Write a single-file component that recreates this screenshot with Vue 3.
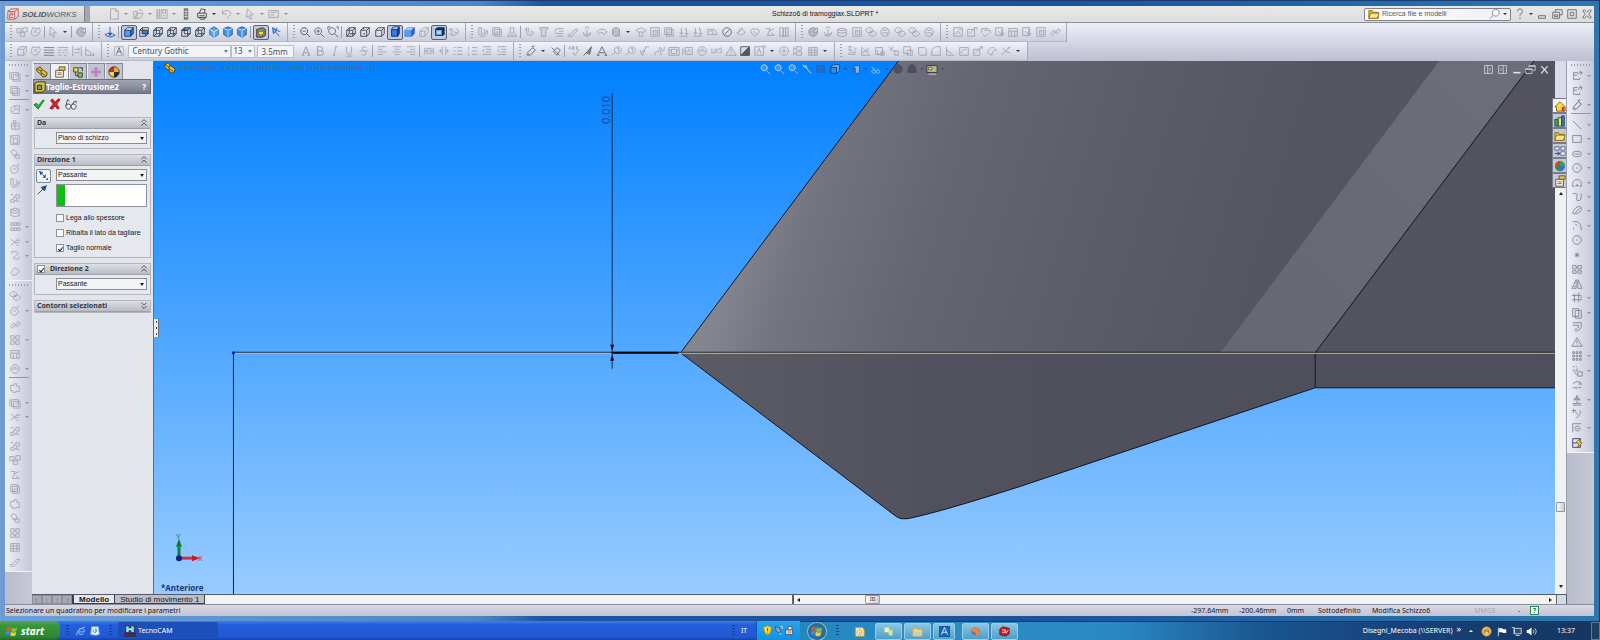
<template>
  <div class="desktop">
    <div class="window">
      <!-- Barra del titolo -->
      <header class="titlebar">
        <div class="brand">
          <Glyph name="logo" />
          <span><b>SOLID</b>WORKS</span>
          <button class="brand-more" aria-label="Menu"></button>
        </div>
        <div class="quick">
          <template v-for="(t, i) in quick" :key="i">
            <i v-if="t.kind === 'drop'" class="drop" :class="{ dark: t.dark }"></i>
            <button v-else class="tool" :class="{ dark: t.dark }" :aria-label="t.name"><Glyph :name="t.name" /></button>
          </template>
        </div>
        <h1>Schizzo6 di tramoggiax.SLDPRT *</h1>
        <div class="title-right">
          <label class="search">
            <Glyph name="folder" />
            <input type="text" placeholder="Ricerca file e modelli" aria-label="Ricerca file e modelli" />
            <Glyph name="lens" />
            <i class="drop dark"></i>
          </label>
          <button class="tool" aria-label="Guida"><Glyph name="help" /></button>
          <i class="drop dark"></i>
          <button v-for="n in ['min', 'restore', 'max', 'close']" :key="n" class="tool" :aria-label="n"><Glyph :name="n" /></button>
        </div>
      </header>

      <!-- Barre degli strumenti -->
      <div class="toolrows">
        <div v-for="(row, r) in rows" :key="r" class="toolrow">
          <div v-for="(bar, b) in row" :key="b" class="toolbar" :style="{ width: bar.width + 'px' }">
            <i class="grip"></i>
            <template v-for="(t, i) in bar.items" :key="i">
              <i v-if="t.kind === 'sep'" class="sep"></i>
              <i v-else-if="t.kind === 'drop'" class="drop-cell"><i class="drop dark"></i></i>
              <template v-else-if="t.kind === 'font'">
                <span class="picker plain font-name">
                  <select aria-label="Carattere"><option>Century Gothic</option></select>
                </span>
                <span class="picker plain font-size">
                  <select aria-label="Dimensione"><option>13</option></select>
                </span>
                <input class="font-height" type="text" value="3.5mm" aria-label="Altezza" />
              </template>
              <button v-else class="tool" :class="{ pressed: t.pressed, dark: t.dark }" :aria-label="t.name"><Glyph :name="t.name" /></button>
            </template>
          </div>
        </div>
      </div>

      <div class="main">
        <aside class="side left">
          <div v-for="(bar, b) in leftBars" :key="b" class="vbar" :class="b ? 'long' : 'short'">
            <i class="hgrip"></i>
            <template v-for="(t, i) in bar" :key="i">
              <i v-if="t.kind === 'sep'" class="hsep"></i>
              <div v-else class="vrow">
                <button class="tool" :aria-label="t.name"><Glyph :name="t.name" /></button>
                <i v-if="t.more" class="drop"></i>
              </div>
            </template>
          </div>
        </aside>

        <div class="centre">
          <div class="work">
            <!-- PropertyManager -->
            <section class="panel">
              <div class="tabs">
                <button v-for="(n, i) in panelTabs" :key="n" :class="{ on: i === 1 }" :aria-label="n"><Glyph :name="n" /></button>
              </div>
              <div class="panel-title">
                <Glyph name="cut" />
                <h2>Taglio-Estrusione2</h2>
                <button aria-label="Guida">?</button>
              </div>
              <div class="confirm">
                <button aria-label="OK"><Glyph name="check" /></button>
                <button aria-label="Annulla"><Glyph name="cross" /></button>
                <button aria-label="Anteprima"><Glyph name="glasses" /></button>
              </div>

              <div class="group">
                <h3>Da <Glyph name="up" /></h3>
                <div class="group-body">
                  <span></span>
                  <span class="picker"><select aria-label="Da"><option>Piano di schizzo</option></select></span>
                </div>
              </div>

              <div class="group">
                <h3>Direzione 1 <Glyph name="up" /></h3>
                <div class="group-body first">
                  <button class="reverse" aria-label="Inverti direzione"><Glyph name="flip" /></button>
                  <span class="picker"><select aria-label="Direzione 1"><option>Passante</option></select></span>
                  <Glyph name="arrow" />
                  <div class="selection"><i></i><input type="text" aria-label="Direzione di estrusione" /></div>
                  <label v-for="o in options" :key="o.text" class="option">
                    <input type="checkbox" v-model="o.on" />{{ o.text }}
                  </label>
                </div>
              </div>

              <div class="group">
                <h3>
                  <label><input type="checkbox" v-model="secondDirection" />Direzione 2</label>
                  <Glyph name="up" />
                </h3>
                <div class="group-body">
                  <span></span>
                  <span class="picker"><select aria-label="Direzione 2"><option>Passante</option></select></span>
                </div>
              </div>

              <div class="group">
                <h3>Contorni selezionati <Glyph name="down" /></h3>
              </div>
            </section>

            <!-- Area grafica -->
            <section class="view">
              <svg class="scene" viewBox="154 61 1402 534" preserveAspectRatio="xMinYMin slice">
                <defs>
                  <linearGradient id="face" gradientUnits="userSpaceOnUse" x1="740" y1="230" x2="1240" y2="380">
                    <stop offset="0" stop-color="#858491" />
                    <stop offset="0.12" stop-color="#747480" />
                    <stop offset="0.35" stop-color="#656671" />
                    <stop offset="0.65" stop-color="#5b5d67" />
                    <stop offset="1" stop-color="#545560" />
                  </linearGradient>
                  <linearGradient id="belly" x1="0" y1="0" x2="1" y2="0">
                    <stop offset="0" stop-color="#5c5c67" />
                    <stop offset="0.3" stop-color="#50515c" />
                    <stop offset="1" stop-color="#4e4f5b" />
                  </linearGradient>
                  <linearGradient id="stripe" x1="1" y1="0" x2="0" y2="1">
                    <stop offset="0" stop-color="#6d6e79" />
                    <stop offset="1" stop-color="#666772" />
                  </linearGradient>
                </defs>
                <path d="M681 353L899 61H1556V353z" fill="url(#face)" />
                <path d="M1221 353L1440 61H1535L1316 353z" fill="url(#stripe)" />
                <path d="M1316 353L1535 61H1556V353z" fill="#53545f" />
                <path d="M681 353L897 517Q901 520 908 519Q935 514 1020 487L1316 388H1556V353z" fill="url(#belly)" />
                <g fill="none" stroke="#14141c">
                  <path d="M899 61L681 353L897 517Q901 520 908 519Q935 514 1020 487L1316 388H1556M1316 388V353L1535 61" />
                  <path d="M233 352.5H1556" />
                  <path d="M612 353H679" stroke="#000" stroke-width="2" />
                </g>
                <path d="M233 353.5H611M679 353.5H1556" stroke="#c9bd83" fill="none" />
                <path d="M233.5 353V595" stroke="#0a1c90" />
                <circle cx="233.5" cy="353" r="1.5" fill="#0018d8" />
                <path d="M612.5 93V369" stroke="#172a55" />
                <path d="M612.5 351l-2-6h4zM612.5 355l-2 6h4z" fill="#05051a" />
                <text class="dimension" transform="translate(610 124) rotate(-90)">0.010</text>
                <g>
                  <path d="M179 558V547" stroke="#138043" stroke-width="3" />
                  <path d="M179 539l-3 8h6z" fill="#0d7d2f" />
                  <path d="M179 558.5H192" stroke="#d3303d" stroke-width="3" />
                  <path d="M200 558.5l-8-3v6z" fill="#cc1424" />
                  <circle cx="179" cy="558.5" r="3" fill="#10208c" />
                  <text class="axis y" x="176" y="539">Y</text>
                  <text class="axis x" x="198" y="561">X</text>
                </g>
                <path d="M1530 100l9 9M1539 100l-9 9" stroke="#7c4550" fill="none" />
              </svg>

              <div class="tree"><i class="drop dark"></i><Glyph name="part" /> tramoggiax&nbsp; (Default&lt; &lt;Default&gt;_Stato di visualizzazione 1&gt;)</div>
              <div class="heads-up">
                <template v-for="(t, i) in headsUp" :key="i">
                  <i v-if="t.kind === 'drop'" class="drop-cell"><i class="drop"></i></i>
                  <button v-else class="tool" :aria-label="t.name"><Glyph :name="t.name" /></button>
                </template>
              </div>
              <div class="doc-buttons">
                <button v-for="n in ['dockL', 'dockR', 'docMin', 'docRestore', 'docClose']" :key="n" class="tool" :aria-label="n"><Glyph :name="n" /></button>
              </div>
              <button class="splitter" aria-label="Riduci pannello"><i></i><i></i><i></i></button>
              <div class="view-name">*Anteriore</div>
            </section>

            <div class="vscroll">
              <div class="task-tabs">
                <button v-for="n in taskTabs" :key="n" :aria-label="n"><Glyph :name="n" /></button>
              </div>
              <button class="caret up" aria-label="Su"></button>
              <i class="thumb"></i>
              <button class="caret down" aria-label="Giù"></button>
            </div>
          </div>

          <div class="sheetbar">
            <div class="sheets">
              <button v-for="n in ['first', 'prev', 'next', 'last']" :key="n" class="nav" :aria-label="n"><Glyph :name="n" /></button>
              <button class="sheet on">Modello</button>
              <button class="sheet">Studio di movimento 1</button>
            </div>
            <div class="hscroll">
              <button class="caret prev" aria-label="Sinistra"></button>
              <i class="thumb">III</i>
              <button class="caret next" aria-label="Destra"></button>
            </div>
            <i class="corner"></i>
          </div>
        </div>

        <aside class="side right">
          <div class="vbar sketch">
            <i class="hgrip"></i>
            <template v-for="(t, i) in rightBar" :key="i">
              <i v-if="t.kind === 'sep'" class="hsep"></i>
              <div v-else class="vrow">
                <button class="tool" :aria-label="t.name"><Glyph :name="t.name" /></button>
                <i v-if="t.more" class="drop"></i>
              </div>
            </template>
          </div>
        </aside>
      </div>

      <footer class="status">
        <span class="hint">Selezionare un quadratino per modificare i parametri</span>
        <span class="coord">-297.64mm</span>
        <span class="coord">-200.46mm</span>
        <span class="coord z">0mm</span>
        <span class="state">Sottodefinito</span>
        <span class="editing">Modifica Schizzo6</span>
        <span class="units">MMGS</span>
        <span class="units-more">-</span>
        <button aria-label="Guida">?</button>
      </footer>
    </div>

    <!-- Barre delle applicazioni -->
    <div class="taskbars">
      <div class="xp">
        <button class="start"><Glyph name="flag" />start</button>
        <i class="dots"></i>
        <button class="tool" aria-label="Internet Explorer"><Glyph name="ie" /></button>
        <button class="tool" aria-label="Posta"><Glyph name="mail" /></button>
        <i class="dots"></i>
        <button class="task"><Glyph name="tecno" />TecnoCAM</button>
        <i class="dots tray-dots"></i>
        <span class="lang">IT</span>
        <div class="tray">
          <Glyph name="shield" /><Glyph name="plug" /><Glyph name="usb" />
        </div>
      </div>
      <div class="seven">
        <button class="orb" aria-label="Start"><Glyph name="flag" /></button>
        <i class="dots"></i>
        <button class="pin bare" aria-label="Outlook"><Glyph name="outlook" /></button>
        <button class="pin" aria-label="Note"><Glyph name="notes" /></button>
        <button class="pin" aria-label="Esplora risorse"><Glyph name="explorer" /></button>
        <button class="pin narrow" aria-label="Autodesk"><Glyph name="letterA" /></button>
        <button class="pin gap" aria-label="Firefox"><Glyph name="fox" /></button>
        <button class="pin" aria-label="SolidWorks"><Glyph name="sw" /></button>
        <span class="network">Disegni_Mecoba (\\SERVER)</span>
        <span class="chevrons">»</span>
        <i class="caret-up"></i>
        <div class="icons"><Glyph name="ball" /><Glyph name="pennant" /><Glyph name="monitor" /><Glyph name="sound" /></div>
        <time>13:37</time>
        <i class="peek"></i>
      </div>
    </div>
  </div>
</template>

<script setup>
import { h, ref } from "vue";

// Ogni icona: una stringa (solo tratto) oppure una lista [d, riempimento, tratto]
const N = "none";
const icons = {
  logo: [["M1 4l4-3h8v9l-4 3H1z", "#f3dcdc", "#b4504d"], ["M1 4h8v9M9 4l4-3M3 6h4v2H3v3h4", N, "#b4504d"]],
  folder: [["M1 3h4l1 2h6v7H1z", "#e8bd3c", "#8a6714"], ["M3 6h10l-2 6H1z", "#ffe98c", "#8a6714"]],
  lens: [["M8 1.500a4 4 0 1 1-.1 0z", "#fff", "#777a85"], ["M5 8.500l-4 4", N, "#777a85"]],
  help: "M4 4q0-3 3-3t3 3q0 2-3 3.500V9M7 11v2",
  min: "M3 9h8v3H3z",
  restore: "M5 5V2h8v6h-3M2 5h8v7H2zM4 8h4v2H4z",
  max: "M2 2h10v10H2zM5 5h4v4H5z",
  close: "M2 3l2-1 3 3 3-3 2 1-3 4 3 4-2 1-3-3-3 3-2-1 3-4z",
  page: "M3 1h6l3 3v9H3zM9 1v3h3",
  open: "M2 4h4v8H2zM3 12l3-6h7l-3 6zM8 3q3-3 4 1",
  save: "M1 2h3v10H1zM6 2h7v10H6zM8 2v4h3V2M2 4v6M8 9h3",
  rec: [["M5 1h4v12H5z", "#96989e", "#55585f"], ["M5 4h4M5 7h4M5 10h4", N, "#dddde0"]],
  print: "M2 6h10v5H2zM4 6l2-5 5 1-2 4M4 9h6M4 11l1 2h5l1-2",
  undo: "M3 2v5h5M3 6q4-5 8-2t-3 8",
  cursor: "M4 1l7 7H7l2 4-2 1-2-4-2 2z",
  opts: "M1 3h11v8H1zM3 5h7M3 8h4",
  assy: "M1 3h5v5H1zM8 2h5v5H8zM5 8h5v4H5zM3 5l2 2",
  gears: "M3 2l4 1 4-1 1 4-3 5-4 1-4-3zM5 5l4 4M9 4L4 8",
  ballQ: [["M7 2a5 5 0 1 0 .1 0z", "#b9bbc4", "#8f919b"], ["M7 7l5-5v5z", "#e6e7ee", "#8f919b"]],
  axisDown: [["M7 1v9", N, "#1e5fb4"], ["M4 8h6l-3 4z", "#1e5fb4", N], ["M1 10l3-1M10 9l3 2-6 2-5-2", N, "#24498c"]],
  cubeFull: [["M2 5h7v7H2z", "#4f9ff0", "#1e3d6e"], ["M2 5l3-3h7L9 5z", "#d7ecff", "#1e3d6e"], ["M9 5l3-3v7l-3 3z", "#2b6fc9", "#1e3d6e"]],
  cubeFront: [["M2 5h7v7H2zM5 2h7v7H5z", N, "#2b333f"], ["M5 5h6v4H5z", "#3689df", "#2b333f"], ["M2 5l3-3M9 12l3-3", N, "#2b333f"]],
  cubeWire: [["M2 5h7v7H2z", "#cfe6fb", "#2b333f"], ["M5 2h7v7H5zM2 5l3-3M9 5l3-3M2 12l3-3M9 12l3-3", N, "#2b333f"]],
  cubeTop: [["M2 5l3-3h7L9 5z", "#4aa7ee", "#2b333f"], ["M2 5h7v7H2zM5 2v7h7M12 2v7l-3 3", N, "#2b333f"]],
  iso: [["M7 1l5 3v6l-5 3-5-3V4z", "#5aa8ee", "#2661a8"], ["M2 4l5 3 5-3M7 7v6", N, "#e4f4ff"]],
  diamond: [["M2 3l5-2 5 2v7l-5 3-5-3z", "#4596e8", "#235491"], ["M7 6v7M2 3l5 2 5-2", N, "#d1eaff"]],
  yellowPart: [["M2 4l7-2 3 2v7l-3 2H2z", "#8d8c7b", "#2d2d2d"], ["M4 5l3 2 3-2v4l-3 2-3-2z", "#f2e84a", "#6b6412"]],
  spray: [["M4 4l7 8", N, "#194fa6"], ["M3 2l5 3-4 4z", "#68b1f5", "#194fa6"], ["M8 2v4M12 6H9", N, "#194fa6"]],
  zoomFit: [["M6 2a4 4 0 1 0 .1 0z", "#e7effb", "#31394b"], ["M4 6h4M9 9l4 4", N, "#2854a0"]],
  zoomIn: [["M6 2a4 4 0 1 0 .1 0z", N, "#5b6376"], ["M4 6h4M6 4v4M9 9l4 4", N, "#5b6376"]],
  zoomBox: [["M6 2a4 4 0 1 0 .1 0z", N, "#5b6376"], ["M9 9l4 4M1 1h3M1 1v3M11 1h2v3", N, "#5b6376"]],
  wire: "M2 5h7v7H2zM5 2h7v7H5zM2 5l3-3M9 5l3-3M2 12l3-3M9 12l3-3",
  hidden: "M2 5h7v7H2zM2 5l3-3h7L9 5M12 2v7l-3 3M5 2v2M5 9h2",
  box: "M2 5h7v7H2zM2 5l3-3h7v7l-3 3M9 5l3-3",
  cubeDark: [["M3 4h7v8H3z", "#2f7fe6", "#152b5c"], ["M3 4l2-3h7l-2 3z", "#b5dcff", "#152b5c"], ["M10 4l2-3v8l-2 3z", "#174e9e", "#152b5c"]],
  cubePlain: [["M1 5h8v7H1z", "#5a9cf5", "#3f7fdc"], ["M1 5l3-3h8L9 5z", "#b1d6ff", "#5d97e2"], ["M9 5l3-3v7l-3 3z", "#3069cf", "#2d5fba"]],
  sheetCube: "M2 6h6v6H2zM2 6l5-4h5L8 6M12 2v5l-4 5M4 8v2",
  shadow: [["M3 4h8v7H3z", "#63a8e8", "#10294e"], ["M3 4l2-2h8v8l-2 1V4z", "#0e2c58", "#10294e"], ["M5 6h4v3H5z", "#c4e0f9", N]],
  eyes: "M1 5q3-4 5 0t5 3M1 9q4 4 7 1M3 3l2 8M9 3q4 1 3 5l-4 3",
  wedge: "M2 2h3v8q4 0 7-5v4q-3 4-8 3l-2-3zM8 3q2 2 1 6",
  sheet: "M2 2h8v8H2zM4 4h8v8H4zM6 7h4v3H6z",
  bell: "M5 2h4v5l3 5H2l3-5zM7 7v5",
  hook: "M3 2v5q0 4 4 4t4-4L8 6M3 2L1 5M5 2v4l3 3",
  plate: [["M2 2h10l-3 4v6H4V6z", "#d3d5de", "#9b9da7"]],
  clip: "M12 3H6q-4 0-4 3t4 3h6M12 6H7M12 12H4",
  slash: "M1 10h3l5-6h4M1 12h5l5-6h2",
  anchor: "M7 4v8M3 7q0 5 4 5t4-5M5 3a2 2 0 1 1 4 0M3 11l8-2",
  lid: "M1 7q6-7 12 0l-4 3-2-3-4 2z",
  bin: [["M3 4q4-4 8 0v6q-4 4-8 0z", "#bfc1ca", "#8f919b"], ["M8 10l4 2", N, "#8f919b"]],
  hat: "M1 5l6-3 6 3-2 2H3zM5 7v5h4V7",
  frame: "M2 2h10v10H2zM5 5h5v5H5zM6 7h3",
  arrows: "M4 2v7M2 7l2 3 2-3M10 4v7M8 9h4M2 12h9M9 2v3",
  slot: "M2 4h8l3 6H2zM4 6h4v4",
  stop: [["M7 2a5 5 0 1 0 .1 0zM4 10l6-6", N, "#5f626c"]],
  leaf: "M2 8q6 5 10-1-3-1-4-5-1 5-6 6zM5 3v4",
  heart: "M2 6q1-4 5-2 4-2 5 2-1 4-5 6-4-2-5-6zM5 6l4 3",
  zag: "M2 3h5l-3 8M6 6l6-3M8 8l4 3M4 11h8",
  book: "M2 2h4v10H2zM6 3h3v9H6zM9 2h3v10H9z",
  block: "M2 3h10v9H2zM2 6h10M5 6v6M9 6v6",
  cyl: "M2 4q5-3 10 0v7q-5 3-10 0zM2 4q5 3 10 0M2 7q5 3 10 0",
  rings: "M5 2a4 3 0 1 0 .1 0zM9 6a4 3 0 1 0 .1 0zM5 5l4 4",
  orb2: "M7 2a5 5 0 1 0 .1 0zM4 4q3 3 6 0M4 8h6v3",
  picA: "M2 2h10v10H2zM3 10l4-4 3 4M8 4h3",
  picB: "M2 4h8v8H2zM4 9l7-7M9 2h4v3",
  picC: "M2 8V3h8M5 5h7v3M3 10l3 2 4-3",
  picD: "M2 2h8v9H2zM5 6l5 5 2-3M9 4v8",
  link: "M2 9l3-4 3 2 3-4 2 2-3 4-3-2-3 4z",
  lines: [["M1 3h12M1 6h12M1 9h12M1 12h12", N, "#74777f"]],
  dashes: "M1 3h12M1 6h4M7 6h6M1 9h3M6 9h3M11 9h2M2 12h3M8 12h3",
  limits: "M2 1v12M12 1v12M4 5h6M4 9h6M8 3l2 2-2 2",
  angle: "M2 2v10h10M2 6q6 0 6 6M11 9v4",
  boxA: [["M2 2h10v10H2z", "#e8eaf2", "#a7a9b2"], ["M4 11l3-8 3 8M5 8h4", N, "#60626c"]],
  tA: [["M3 12l4-10 4 10M4 9h6M2 12h3M9 12h3", N, "#92959e"]],
  tB: [["M4 2v10h4q3 0 3-3t-3-2H4M4 2h4q2 0 2 2.500T8 7", N, "#92959e"]],
  tI: "M8 2L6 12M7 2h3M4 12h3",
  tU: "M4 2v5q0 4 3 4t3-4V2M3 13h8",
  tS: "M10 3Q7 1 5 3q-1 2 2 4 4 2 2 4-2 2-5 0M2 7h10",
  alignL: "M2 2h10M2 5h6M2 8h10M2 11h6",
  alignC: "M2 2h10M4 5h6M2 8h10M4 11h6",
  alignR: "M2 2h10M6 5h6M2 8h10M6 11h6",
  fitW: "M2 3v8M12 3v8M3 7h8M4 4h6M4 10h6M5 5l-2 2 2 2M9 5l2 2-2 2",
  spread: "M5 2v10M9 2v10M1 7h3M10 7h3M3 5v4M11 5v4",
  list: "M2 3h2M6 3h6M2 7h2M6 7h6M2 11h2M6 11h6",
  numbered: "M2 2v3M6 3h6M2 7h1M6 7h6M2 10v3M6 11h6",
  indent: "M2 2h10M6 5h6M6 8h6M2 11h10M4 5L2 6.500 4 8",
  dim: [["M3 9l6-6 3 3-6 6q-3 0-3-3z", N, "#555963"], ["M2 11l2 2M8 2l3-1", N, "#555963"]],
  dim2: [["M2 3l9 9M4 8l4-5 4 3-4 6z", N, "#61656f"]],
  abc: "M1 5l1-3 1 3M5 2v3h2V2zM12 2h-2v3h2M5 8l3 4 5-7",
  brush: [["M2 12l4-4 5-6-2 9-4-2z", "#85888f", "#62656d"]],
  bigA: [["M2 12l5-10 5 10M4 9h6M1 12h3M10 12h3", N, "#60636c"]],
  note: "M8 2a4 4 0 1 0 .1 0zM5 8l-4 4M7 4h2v4",
  roughness: "M1 6l3 6 4-10h4M3 7h4",
  weld: "M1 12q1-6 3-4t2-3 3 0 3-3M8 5v7",
  grid2: "M1 3h12v9H1zM4 5h6v5H4zM1 6h3M10 6h3",
  datum: "M1 3v9M1 7h3M4 3h8v8H4zM6 9l2-4 2 4",
  target: "M7 2a5 5 0 1 0 .1 0zM3 7h8M5 5h4",
  cc: "M1 4v5h4V4M7 9V5h2l3-2M9 9h3V4",
  tri: "M7 2l6 10H1zM7 5v4M7 10v1",
  hatch: [["M2 2h10v10H2z", "#d9dae1", "#50535b"], ["M12 2v10H2z", "#565962", "#50535b"]],
  boxedA: "M1 2h10v10H1zM3 10l3-6 2 6M10 1h3v3",
  circle: "M7 2a5 5 0 1 0 .1 0zM7 4v6M4 7h6",
  flow: "M2 2v10M2 4h3M2 10h3M5 2h6v4H5zM5 8h6v4H5z",
  table: "M2 3h10v9H2zM2 6h10M2 9h10M5 3v9M9 3v9",
  sk1: "M2 2h4L3 6h4L3 11h8M9 3l3 2-3 3M7 9h5",
  sk2: "M2 2v10h10M3 9l8-6M4 4l6 7M7 7h4",
  sk3: "M2 3h8v8H2zM5 6a3 3 0 1 0 4 0M8 8h4v4H8z",
  sk4: "M1 2l5 5M6 2L2 7M6 7h6v5H8V6",
  sk5: "M2 2h8v8H2zM6 6h6v6H6z",
  sk6: "M3 3h7l2 2v7H5l-2-2z",
  sk7: "M2 12V6l4-4h6v10z",
  sk8: "M3 2v10h9M3 6l6 4",
  sk9: "M2 3h10v9H2zM4 10q0-5 6-5",
  sk10: "M2 5h7v7H2zM4 9l8-7M9 2h3v3",
  sk11: "M2 9q2-7 7-6l3 3q-5 0-5 6z",
  sk12: "M2 11l4-3M6 8l5-6M3 3l4 5 5 1M10 5l2-3",
  extr: "M3 3h8v8H3zM5 5h8v8H5zM1 2v9M7 7h4",
  fillet: "M2 6q1-4 5-4h5v9H4q-2-2-2-5M7 2v4h5M7 6l-4 4",
  draft: "M3 12h9V5H3zM5 5V2h3v3M7 5v7M3 8h9",
  shell: "M2 2h10v10H2zM5 5h5v6H5zM2 2l3 3",
  rib: "M2 4l4-2 3 3v4H5zM6 8h6v4H8z",
  dome: "M2 8q0-5 4-5t5 4q-1 5-5 5t-4-4M9 3l3-2M5 7h3",
  pats: "M2 2h3v3H2zM6 2h3v3H6zM10 2h3v3h-3zM2 8h3v3H2zM6 8h3v3H6zM10 8h3v3h-3z",
  refg: "M2 3l9 9M11 3L2 11M9 5h4M7 7l5 1",
  curve: "M3 4V2h6q3 2 0 4T5 9t6 2l1-3",
  inst: "M2 9l5-6M4 12q6 0 8-5M7 3l5 4M2 9l3 3",
  cubes: "M2 2h4v4H2zM8 2h4v4H8zM2 8h4v4H2zM8 8h4v4H8zM6 4h2M6 10h2",
  puzzle: "M2 4h4V2h3v3h3v6H8v1H4v-2H2z",
  steps: "M2 12V9h3V6h3V3h4v4H9v3H6v2zM2 3h3M9 11h3",
  arc1: "M8 3H3v3h4M3 6v5h7V9M8 5q2-3 5-2M10 1l3 2-2 3",
  sline: "M2 2l10 10",
  rect: "M2 3h10v8H2z",
  pill: "M5 4h4q3 0 3 3t-3 3H5q-3 0-3-3t3-3zM4 7h6",
  circ: "M7 2a5 5 0 1 0 .1 0zM6 7h2M9 4l1-1",
  arc: "M2 11q-1-8 5-8t5 8M7 8v3M5 10h4M2 11h2M10 11h2",
  spline: "M2 3h4q2 0 1 3t0 5h3q2 0 2-8",
  ellipse: "M2 10q0-4 4-7t6 0q1 4-3 6t-7 1zM5 9l5-5",
  sfillet: "M2 2h5q5 1 5 10M3 9v2M5 5l2 1",
  star: "M7 4v6M4 7h6M5 5l4 4M9 5l-4 4",
  chunk: "M2 3h4v4H2zM8 3h4v4H8zM2 9h4v3H2zM8 9h4v3H8zM6 5h2",
  mirror: "M6 2v10H1zM8 2v10h5zM3 10h2",
  trim: "M1 4h11M1 9h12M4 2v10M9 1v11M11 6h2",
  convert: "M2 2h7v9H2zM5 4h7v9H5z",
  offset: "M2 2h10v3q0 6-7 7M2 5h7q0 4-5 5",
  pattern: "M2 2h2v2H2zM6 2h2v2H6zM10 2h2v2h-2zM2 6h2v2H2zM6 6h2v2H6zM10 6h2v2h-2zM2 10h2v2H2zM6 10h2v2H6zM10 10h2v2h-2z",
  move: "M2 2h2M6 2h1M2 5h1M2 7h5V4M8 8h5v5H8zM4 9l4 3",
  rotate: "M2 6q5-6 10 0M10 3l2 3h-3M2 10h3M8 10h4M6 9v3",
  relation: "M2 11h10M4 8l3-6 3 6M7 2v9M3 6h8M2 13h10",
  repair: "M1 3h5M3 1v5M6 12q6-4 5-9M8 8l-3-4",
  snap: "M2 12V2h10M6 5a3 3 0 1 0 3 0zM6 8h3",
  rapid: [["M2 2h9v3M2 2v10h9V9M2 7h5", N, "#302a7c"], ["M6 6l5-4-1 4 3 1-5 5 1-4z", "#f9dd32", "#71630f"]],
  part: [["M1 3l4-2 2 3 6 4-1 4-4 1-2-3-5-4z", "#e7c342", "#4b3e12"], ["M1 3l5 3 1-2M6 6v4M6 8l5 3", N, "#4b3e12"]],
  props: [["M2 5h9v8H2z", "#f6f2dc", "#5c4d34"], ["M6 1h7v4H6z", "#eac24a", "#5c4d34"], ["M4 8h5M4 10h5", N, "#786b53"]],
  config: [["M2 2h5v5H2z", "#ede23a", "#3c3b22"], ["M7 8h5v5H7z", "#8ac460", "#26331e"], ["M4 7v4h3M8 2h4v4", N, "#333"]],
  dimx: [["M7 1v12M1 7h12", N, "#b642b7"], ["M7 3a4 4 0 1 0 .1 0z", N, "#c561c6"]],
  wheel: [["M7 1a6 6 0 0 1 6 6H7z", "#e0b92b", N], ["M7 7h6a6 6 0 0 1-6 6z", "#303134", N], ["M7 13a6 6 0 0 1-6-6h6z", "#efd64b", N], ["M1 7a6 6 0 0 1 6-6v6z", "#c62b34", N], ["M7 1a6 6 0 1 0 .1 0z", N, "#47211d"]],
  cut: [["M1 3l3-2h9v9l-3 3H1z", "#dbc44e", "#2e2b13"], ["M4 5h5v5H4z", "#7ba155", "#1c2412"]],
  check: [["M1 8l3-2 2 3 6-7 1 1-7 10z", "#2fae3c", "#16802a"]],
  cross: [["M2 3l2-2 3 4 4-4 2 1-4 5 3 5-2 1-3-4-3 4-3-1 4-5z", "#d8202b", "#961620"]],
  glasses: [["M4 7a3 3 0 1 0 .1 0zM10 7a3 3 0 1 0 .1 0z", "#e9ebef", "#33363d"], ["M1 9l2-7 2 1M8 8l3-4h2v2", N, "#33363d"]],
  up: [["M4 6l3-3 3 3M4 10l3-3 3 3", N, "#3f434c"]],
  down: [["M4 3l3 3 3-3M4 7l3 3 3-3", N, "#3f434c"]],
  flip: [["M3 3l5 5", N, "#1e4aa0"], ["M1 1l5 2-3 3zM12 12l-3-1 2-2zM9 5v4H5z", "#1e4aa0", N]],
  arrow: [["M2 12l6-6", N, "#1f3f86"], ["M12 2L6 4l4 4z", "#1f4fa8", "#1f3f86"]],
  zLight: [["M6 2a3.500 3.500 0 1 0 .1 0z", "#4a92dc", "#cfe4fa"], ["M9 9l4 4", N, "#a6c9ee"]],
  zWand: [["M2 2l10 10", N, "#d7ecff"], ["M2 4l4-2 2 5z", "#8fc3f7", N]],
  zDim: [["M2 3h9v8H2z", "#1a6fd0", "#1d68bd"]],
  zCube: [["M2 5h7v7H2z", "#2f8be8", "#143f7c"], ["M2 5l3-3h7v7l-3 3V5z", "#79b9f4", "#143f7c"]],
  zGlass: [["M5 3h6v9H5z", "#82b7f2", "#1c55a0"], ["M2 6h5v5H2z", "#226fc8", N]],
  zEye: [["M1 5l4 3M8 8a2 2 0 1 0 .1 0zM3 8a2 2 0 1 0 .1 0z", N, "#a9d0f8"]],
  zBall: [["M7 2a5 5 0 1 0 .1 0z", "#4c5160", "#4c5160"]],
  zScene: [["M2 11q0-9 5-9t5 9z", "#4b4f5c", "#4b4f5c"]],
  zCam: [["M1 3h12v8H1z", "#b9b899", "#2b2e33"], ["M3 5h4v3H3z", "#ece79b", "#565b44"], ["M3 13h9", N, "#ddd"]],
  dockL: [["M2 2h10v10H2zM6 2v10M10 5L8 7l2 2", N, "#d8d9de"]],
  dockR: [["M2 2h10v10H2zM8 2v10M4 5l2 2-2 2", N, "#d8d9de"]],
  docMin: [["M3 10h9v2H3z", "#e2e3e7", N]],
  docRestore: [["M5 5V2h8v6h-3M1 6h8v6H1zM5 3h8M1 7h8", N, "#d8d9de"]],
  docClose: [["M2 3h2l3 3 3-3h2L8 7l4 5h-2L7 8l-3 4H2l4-5z", "#e8e9ec", N]],
  home: [["M1 8l6-6 6 6v5H3V8z", "#f5de3a", "#8b4b13"], ["M9 8h3v5H9z", "#c0392b", N]],
  library: [["M1 5h4v8H1z", "#42a25b", "#1e4e2b"], ["M5 3h4v10H5z", "#efe264", "#1e4e2b"], ["M9 1h3v12H9z", "#3d7ecb", "#203f6b"]],
  views: [["M1 2h5v4H1zM8 2h5v4H8z", "#dbe5f4", "#56647e"], ["M8 8h5v4H8z", "#fff", "#56647e"], ["M1 10h5M4 8l3 2-3 2", N, "#1733a5"]],
  sphere: [["M7 1a6 6 0 0 1 6 6H7z", "#35a447", N], ["M7 7h6a6 6 0 0 1-6 6z", "#3a6dd1", N], ["M7 13a6 6 0 0 1-6-6h6z", "#3a8a4a", N], ["M1 7a6 6 0 0 1 6-6v6z", "#e23a2e", N]],
  first: "M4 3v8M10 3L6 7l4 4",
  prev: "M9 3L5 7l4 4",
  next: "M5 3l4 4-4 4",
  last: "M10 3v8M4 3l4 4-4 4",
  flag: [["M1 3q3-2 5 0L5 7Q3 5 0 7z", "#e8532c", N], ["M7 3q3 2 6 0l-1 4q-3 2-6 0z", "#86c53c", N], ["M0 8q3-2 5 0l-1 4q-2-2-4 0z", "#3f8bea", N], ["M6 8q3 2 6 0l-1 4q-3 2-6 0z", "#f7ca35", N]],
  ie: [["M11 8H4q0 3 3 3 2 0 3-1M4 7q1-4 4-3 3 0 3 4M2 12Q1 6 12 2", N, "#8fd0fb"]],
  mail: [["M3 2h8l1 9-4 1-6-1z", "#e9f4fd", "#6fb4ea"], ["M6 5a2 2 0 1 0 2 0M8 4v4", N, "#3588cd"]],
  tecno: [["M2 1h4v8H2zM8 1h4v8H8z", "#8fe3ef", "#1a2133"], ["M5 4h4v2H5z", "#e6f7fa", N], ["M1 10h5v3H1zM8 10h5v3H8z", "#a3261f", "#1a2133"]],
  shield: [["M7 1l5 2q0 7-5 10Q2 10 2 3z", "#f9db35", "#b78f0a"], ["M7 4v4M7 10v1", N, "#333"]],
  plug: [["M3 2l4 1 3 4-2 3-4-2z", "#8ca7c0", "#2b4f77"], ["M8 10l3 3M9 2h3v3", N, "#d8e9f7"]],
  usb: [["M2 6h9v6H2z", "#dedfe5", "#404a58"], ["M5 2h5v4H5z", "#f7f7f7", "#404a58"], ["M5 9h4", N, "#aa3333"]],
  outlook: [["M2 2h9l2 3v8H2z", "#fae6ac", "#d49b33"], ["M7 5a3 3 0 1 0 .1 0zM7 7v2h2", "#fff", "#d58e1c"]],
  notes: [["M2 2h6v6H2z", "#f6f2a0", N], ["M6 5h6v7H8z", "#d8ea8a", N]],
  explorer: [["M1 3h5l1 1h6v9H1z", "#f0d679", "#c9a545"], ["M3 8h8v5H3z", "#a8d2ee", N]],
  letterA: [["M0 0h14v14H0z", "#1565b8", "#0d4d92"], ["M3 11l4-9 4 9M4 8h6", N, "#fff"]],
  fox: [["M7 2a5 5 0 1 0 .1 0z", "#4e76bb", "#d76b2a"], ["M2 5q3-5 8-2l2 6q-2 4-6 4 3-3 0-5-3 0-4-3z", "#ec8440", N]],
  sw: [["M1 4l4-3 8 2v7l-5 3-7-2z", "#c51e27", "#6f0d14"], ["M4 5h4v3H4M9 9l3-4", N, "#fff"]],
  ball: [["M7 1a6 6 0 1 0 .1 0z", "#f0c668", "#b97b1c"], ["M4 10q0-5 3-6t3 6M4 6l6 1", N, "#7e6030"]],
  pennant: [["M3 2v11", N, "#fff"], ["M4 3h4l1 1h4v5H9L8 8H4z", "#fff", N]],
  monitor: [["M4 3h9v7H4z", "#31536f", "#e4edf4"], ["M1 2h3v8M6 12h5", N, "#e4edf4"]],
  sound: [["M1 5h2l4-3v10L3 9H1z", "#fff", N], ["M9 5q2 2 0 4M11 3q4 4 0 8", N, "#e9f2f8"]],
};

function Glyph(props) {
  const icon = icons[props.name];
  const layers = Array.isArray(icon) ? icon : [[icon, N, "currentColor"]];
  return h(
    "svg",
    { class: "glyph", viewBox: "0 0 14 14", "aria-hidden": "true" },
    layers.map(([d, fill, stroke]) => h("path", { d, fill, stroke }))
  );
}
Glyph.props = ["name"];

// "|" separatore, "v" freccia, "*" premuto, "+" attivo, ">" con menu
function parse(text) {
  return text.split(" ").map((word) => {
    if (word === "|") return { kind: "sep" };
    if (word[0] === "v" && word.length < 3) return { kind: "drop", dark: word === "v+" };
    if (word === "FONT") return { kind: "font" };
    return {
      name: word.replace(/[*+>]/g, ""),
      pressed: word.includes("*"),
      dark: word.includes("+"),
      more: word.includes(">"),
    };
  });
}

const quick = parse("page v open v save v rec print+ v+ undo v cursor v opts v");

const rows = [
  [
    { width: 88, items: parse("assy gears | cursor v | ballQ") },
    { width: 195, items: parse("axisDown | cubeFull* cubeFront cubeWire cubeWire cubeTop cubeWire iso diamond diamond | yellowPart* spray") },
    { width: 178, items: parse("zoomFit zoomIn zoomBox | wire+ hidden+ box+ cubeDark* cubePlain sheetCube shadow* eyes") },
    { width: 330, items: parse("wedge sheet bell | hook plate clip slash anchor lid bin v hat frame sheet arrows arrows slot stop leaf heart zag book") },
    { width: 145, items: parse("ballQ anchor cyl frame rings orb2 rings rings orb2") },
    { width: 126, items: parse("picA picB picC picD block picD frame link") },
  ],
  [
    { width: 97, items: parse("box gears lines dashes limits angle") },
    { width: 412, items: parse("boxA FONT tA tB tI tU tS | alignL alignC alignR | fitW spread list numbered indent indent") },
    { width: 321, items: parse("dim v dim2 | abc brush bigA note note roughness weld grid2 datum target cc tri hatch boxedA v circle flow table v") },
    { width: 193, items: parse("sk1 sk2 sk3 sk4 sk5 sk6 sk7 sk8 sk9 sk10 sk11 sk12 v") },
  ],
];

const leftBars = [
  parse("extr> sheet> | fillet> draft shell rib dome wedge steps cyl pats> refg> curve> inst"),
  parse("rings dome> link cubes> block target> | puzzle extr> refg> steps steps assy zag sheet puzzle rib cubes table slash"),
];

const rightBar = parse(
  "arc1> arc1 dim> | sline> rect> pill> circ> arc> spline> ellipse> sfillet> circ star chunk mirror trim> convert> offset tri pattern> move> rotate relation> repair snap> rapid"
);

const headsUp = parse("zLight zLight zLight zWand zDim zCube v zGlass v zEye v zBall zScene v zCam v");
const panelTabs = ["part", "props", "config", "dimx", "wheel"];
const taskTabs = ["home", "library", "folder", "views", "sphere", "props"];

const options = ref([
  { text: "Lega allo spessore", on: false },
  { text: "Ribalta il lato da tagliare", on: false },
  { text: "Taglio normale", on: true },
]);
const secondDirection = ref(true);
</script>

<style>
body {
  background: #1c4f8f;
}
</style>

<style scoped>
.desktop {
  display: flex;
  flex-direction: column;
  height: 100vh;
  overflow: hidden;
  font-family: "Noto Sans", "Open Sans", sans-serif;
  font-size: 7px;
  line-height: 10px;
  color: #15161c;
}

.desktop * {
  box-sizing: border-box;
}

button,
input,
select {
  margin: 0;
  padding: 0;
  border: 0;
  background: none;
  font: inherit;
  color: inherit;
}

h1, h2, h3 {
  margin: 0;
  font-size: inherit;
}

.glyph {
  display: block;
  flex: none;
  width: 12px;
  height: 12px;
}

.window {
  flex: 1;
  min-height: 0;
  display: flex;
  flex-direction: column;
  padding: 5px;
  background: linear-gradient(90deg, #7aa2d4 0, #6c97cc 2px, transparent 5px), linear-gradient(90deg, #6ba0db, #4b86c6 30%, #1d559f 34%, #1b539b 65%, #2c78ae);
  border-top: 1px solid #183c78;
  border-right: 1px solid #12365c;
}

/* Titolo */
.titlebar {
  flex: none;
  display: flex;
  align-items: center;
  height: 17px;
  background: linear-gradient(#e9e9e8, #dcdddd);
  border-bottom: 1px solid #8d8f94;
}

.brand {
  display: flex;
  align-items: center;
  gap: 3px;
  width: 85px;
  height: 16px;
  padding-left: 2px;
  background: linear-gradient(#e8e8e8, #c9cacd);
  font: italic 8px "Liberation Sans", sans-serif;
  color: #55565a;
}

.brand span {
  flex: 1;
}

.brand-more {
  width: 6px;
  height: 16px;
  background: #a4a7b1;
  border-left: 1px solid #7c808b;
}

.quick {
  display: flex;
  align-items: center;
  margin-left: 18px;
  gap: 4px;
}

.tool {
  display: flex;
  align-items: center;
  justify-content: center;
  color: #a0a2ac;
}

.tool.dark {
  color: #3a3d46;
}

.drop {
  flex: none;
  width: 0;
  height: 0;
  border: 2px solid transparent;
  border-top-color: #8e919b;
  border-bottom: 0;
}

.drop.dark {
  border-top-color: #33353d;
}

.titlebar h1 {
  flex: 1;
  padding-left: 484px;
  font-family: "Liberation Sans", sans-serif;
  font-weight: normal;
  white-space: nowrap;
}

.title-right {
  display: flex;
  align-items: center;
  gap: 3px;
  padding-right: 1px;
}

.title-right .tool {
  color: #62656d;
}

.search {
  display: flex;
  align-items: center;
  gap: 2px;
  width: 147px;
  height: 13px;
  padding: 0 3px;
  background: linear-gradient(90deg, #fff, #eef0f6);
  border: 1px solid #7f828d;
  border-radius: 2px;
}

.search input {
  flex: 1;
  min-width: 0;
  outline: 0;
  font-family: "Liberation Sans", sans-serif;
}

.search input::placeholder {
  color: #555861;
}

/* Barre orizzontali */
.toolrows {
  flex: none;
  background: linear-gradient(#eceef8, #bdc0d2);
}

.toolrow {
  display: flex;
  height: 19px;
}

.toolbar {
  flex: none;
  display: flex;
  align-items: center;
  padding: 0 4px 0 2px;
  background: linear-gradient(#f2f3fa, #cacddb);
  border-right: 1px solid #a6a9b6;
  border-bottom: 1px solid #b6b9c6;
}

.toolbar .tool {
  flex: 14 1 0;
  min-width: 0;
  height: 15px;
}

.toolbar .pressed {
  background: #c3c7dc;
  border: 1px solid #5b6076;
  border-radius: 2px;
}

.grip {
  flex: none;
  width: 2px;
  height: 14px;
  margin: 0 3px;
  background: repeating-linear-gradient(#9b9eac 0 1px, transparent 1px 3px);
}

.sep {
  flex: none;
  width: 1px;
  height: 12px;
  margin: 0 2px 0 1px;
  background: #9b9eab;
}

.drop-cell {
  flex: 10 1 0;
  display: flex;
  justify-content: center;
}

.picker {
  position: relative;
  display: block;
  height: 12px;
  background: #f4f4f6;
  border: 1px solid #888c96;
}

.picker select {
  display: block;
  width: 100%;
  height: 10px;
  padding-left: 1px;
  line-height: 10px;
  appearance: none;
}

.picker::after {
  content: "";
  position: absolute;
  right: 2px;
  top: 4px;
  border: 2px solid transparent;
  border-top: 3px solid #1b1c20;
  border-bottom: 0;
}

.picker.plain,
.font-height {
  flex: none;
  height: 13px;
  background: #f3f4f8;
  border: 1px solid #bbbdc8;
  font-size: 8px;
  color: #4c4f58;
}

.picker.plain::after {
  border-top-color: #7b7e88;
}

.font-name {
  width: 103px;
  margin-left: 2px;
}

.font-name select {
  padding-left: 3px;
}

.font-size {
  width: 24px;
}

.font-height {
  width: 37px;
  margin: 0 4px 0 2px;
  padding-left: 3px;
}

/* Area centrale */
.main {
  flex: 1;
  min-height: 0;
  display: flex;
}

.side {
  flex: none;
  width: 27px;
  background: linear-gradient(90deg, #b9bccb, #c6c8d6);
}

.vbar {
  display: flex;
  flex-direction: column;
  padding: 3px 3px 2px 4px;
  background: linear-gradient(90deg, #eef0f8, #c4c8d8);
  border-bottom: 1px solid #f2f3f8;
}

.vbar.short {
  height: 220px;
}

.vbar.long {
  height: 291px;
}

.vbar.sketch {
  height: 392px;
}

.hgrip {
  flex: none;
  height: 2px;
  margin-bottom: 3px;
  background: repeating-linear-gradient(90deg, #9b9eac 0 1px, transparent 1px 3px);
}

.hsep {
  flex: none;
  height: 1px;
  margin: 1px 0 3px;
  background: #9396a5;
}

.vrow {
  flex: 1;
  min-height: 0;
  display: flex;
  align-items: center;
  justify-content: space-between;
}

.vrow .tool {
  color: #a1a3ae;
}

.right .vrow .tool {
  color: #7f828d;
}

.centre {
  flex: 1;
  min-width: 0;
  display: flex;
  flex-direction: column;
}

.work {
  flex: 1;
  min-height: 0;
  display: flex;
}

/* Pannello */
.panel {
  flex: none;
  width: 122px;
  padding: 2px 2px 0 1px;
  background: #e2e5ea;
  border-right: 1px solid #5f6f87;
}

.tabs {
  display: flex;
  height: 16px;
}

.tabs button {
  display: flex;
  align-items: center;
  justify-content: center;
  width: 18px;
  background: #c3c6d2;
  border: 1px solid #868a98;
  border-bottom: 0;
  border-left-color: #eef0f5;
}

.tabs .on {
  background: #f0f1f5;
}

.panel-title {
  display: flex;
  align-items: center;
  height: 15px;
  padding: 0 4px 0 0;
  background: linear-gradient(#a2a5b4, #777a8c);
  border: 1px solid #6a6d7b;
  color: #fff;
  font-size: 8px;
  font-weight: bold;
}

.panel-title h2 {
  flex: 1;
}

.confirm {
  display: flex;
  gap: 4px;
  height: 23px;
  align-items: center;
  padding-bottom: 4px;
}

.group {
  margin: 0 0 5px 1px;
  border: 1px solid #b3b6bf;
  background: #e5e8ec;
}

.group h3 {
  display: flex;
  align-items: center;
  justify-content: space-between;
  height: 11px;
  padding: 0 0 0 2px;
  background: linear-gradient(#dddfe3, #b9bcc4);
  border-bottom: 1px solid #9da0a9;
  color: #34373f;
}

.group h3 label {
  display: flex;
  align-items: center;
  gap: 5px;
}

.group-body {
  display: grid;
  grid-template-columns: 16px minmax(0, 1fr);
  column-gap: 4px;
  row-gap: 1px;
  align-items: start;
  padding: 3px 3px 4px 1px;
  font-family: "Liberation Sans", sans-serif;
}

.group-body.first {
  padding-bottom: 2px;
}

.reverse {
  display: flex;
  align-items: center;
  justify-content: center;
  width: 15px;
  height: 14px;
  border: 1px solid #7c87a0;
  border-radius: 2px;
  background: #f1f2f6;
}

.selection {
  display: flex;
  height: 23px;
  margin-bottom: 3px;
  background: #fff;
  border: 1px solid #8d919b;
}

.selection i {
  width: 8px;
  background: #0fbd13;
}

.selection input {
  flex: 1;
  min-width: 0;
}

.option {
  grid-column: 2;
  display: flex;
  align-items: center;
  gap: 2px;
  height: 14px;
  white-space: nowrap;
}

input[type="checkbox"] {
  appearance: none;
  display: flex;
  align-items: center;
  justify-content: center;
  width: 8px;
  height: 8px;
  background: #f7f8fa;
  border: 1px solid #8f939d;
}

input[type="checkbox"]:checked::before {
  content: "";
  width: 2px;
  height: 4px;
  border: solid #21242b;
  border-width: 0 1px 1px 0;
  transform: rotate(40deg);
}

/* Vista */
.view {
  flex: 1;
  min-width: 0;
  position: relative;
  overflow: hidden;
  background: linear-gradient(#0080ff, #4ca5ff 50%, #99ccff);
}

.scene {
  display: block;
  width: 100%;
  height: 100%;
}

.dimension {
  font: 11px "Open Sans", sans-serif;
  fill: #1d3f9c;
}

.axis {
  font-size: 8px;
}

.axis.y {
  fill: #1f7c6d;
}

.axis.x {
  fill: #cf2b45;
}

.tree {
  position: absolute;
  left: 3px;
  top: 1px;
  display: flex;
  align-items: center;
  gap: 3px;
  line-height: 12px;
  color: #5c6a72;
  white-space: nowrap;
}

.heads-up {
  position: absolute;
  left: 43%;
  top: 2px;
  width: 190px;
  padding-left: 2px;
  display: flex;
  align-items: center;
}

.heads-up .tool {
  flex: 14 1 0;
  min-width: 0;
}

.heads-up .drop-cell {
  flex: 7 1 0;
}

.heads-up .drop {
  border-top-color: #2e4f86;
}

.doc-buttons {
  position: absolute;
  right: 5px;
  top: 3px;
  display: flex;
  gap: 3px;
}

.doc-buttons .glyph {
  width: 11px;
  height: 11px;
}

.splitter {
  position: absolute;
  left: 0;
  top: 258px;
  display: flex;
  flex-direction: column;
  align-items: center;
  justify-content: space-around;
  width: 5px;
  height: 18px;
  background: #eef0f4;
  border-right: 1px solid #686d7a;
}

.splitter i {
  width: 1px;
  height: 2px;
  background: #40444e;
}

.view-name {
  position: absolute;
  left: 7px;
  bottom: 0;
  font-size: 8px;
  line-height: 12px;
  font-weight: bold;
  color: #16367c;
}

/* Scorrimento */
.vscroll {
  position: relative;
  flex: none;
  width: 12px;
  display: flex;
  flex-direction: column;
  align-items: center;
  background: linear-gradient(#d8dbe8 0 126px, #f0f1f1 126px);
  border-right: 1px solid #9a9dac;
}

.task-tabs {
  position: absolute;
  right: 0;
  top: 37px;
  width: 14px;
}

.task-tabs button {
  display: flex;
  align-items: center;
  justify-content: center;
  width: 14px;
  height: 15px;
  background: #c5c8d5;
  border: 1px solid #777b8b;
  border-right: 0;
}

.task-tabs button:first-child {
  background: #f3f4f8;
}

.caret {
  flex: none;
  width: 8px;
  height: 10px;
  display: flex;
  align-items: center;
  justify-content: center;
}

.caret::before {
  content: "";
  border: 2px solid transparent;
}

.caret.up {
  margin-top: 127px;
}

.caret.up::before {
  border-bottom: 3px solid #222;
  border-top: 0;
}

.caret.down::before {
  border-top: 3px solid #222;
  border-bottom: 0;
}

.caret.prev::before {
  border-right: 3px solid #222;
  border-left: 0;
}

.caret.next::before {
  border-left: 3px solid #222;
  border-right: 0;
}

.thumb {
  flex: none;
  background: linear-gradient(90deg, #fafafa, #cfd0d4);
  border: 1px solid #94969d;
  border-radius: 1px;
}

.vscroll .thumb {
  width: 9px;
  height: 10px;
  margin: auto 0 69px;
}

.vscroll .down {
  margin-bottom: 3px;
}

.sheetbar {
  flex: none;
  display: flex;
  height: 10px;
  background: #f1f2f2;
  border-top: 1px solid #555a66;
}

.sheets {
  flex: 1;
  display: flex;
  border-right: 2px solid #5c606b;
}

.nav {
  display: flex;
  align-items: center;
  justify-content: center;
  width: 10px;
  background: #a9abb6;
  border: 1px solid #8a8c97;
  color: #7b7d88;
}

.nav .glyph {
  width: 8px;
  height: 8px;
}

.sheet {
  padding: 0 5px;
  font: 8px/9px "Liberation Sans", sans-serif;
  background: #bcbecb;
  border-right: 1px solid #3c3f49;
  border-bottom: 1px solid #3c3f49;
  white-space: nowrap;
}

.sheet.on {
  background: #e6e7ec;
  border-left: 2px solid #3c3f49;
  font-weight: bold;
}

.hscroll {
  flex: 1;
  display: flex;
  align-items: center;
}

.hscroll .thumb {
  width: 15px;
  height: 9px;
  margin: 0 auto 0 63px;
  font-size: 5px;
  line-height: 7px;
  font-style: normal;
  text-align: center;
}

.corner {
  width: 11px;
  margin-left: 2px;
  background: #d6d8e3;
  border-left: 1px solid #60636f;
  border-right: 1px solid #60636f;
}

/* Stato */
.status {
  flex: none;
  display: flex;
  align-items: center;
  height: 12px;
  padding: 0 55px 0 1px;
  background: linear-gradient(#d9dae5, #c3c4d2);
  border-top: 1px solid #8b8e9b;
  white-space: nowrap;
}

.hint {
  flex: 1;
}

.coord {
  width: 48px;
}

.coord.z {
  width: 31px;
}

.state {
  width: 54px;
}

.editing {
  width: 102px;
}

.units {
  width: 44px;
  color: #a6a8b6;
}

.units-more {
  width: 12px;
}

.status button {
  width: 9px;
  height: 9px;
  border: 1px solid #2d8555;
  background: #f2fbf4;
  color: #087b2c;
  line-height: 7px;
  font-weight: bold;
}

/* Barre applicazioni */
.taskbars {
  flex: none;
  display: flex;
  height: 19px;
}

.xp {
  flex: 1;
  display: flex;
  align-items: center;
  background: linear-gradient(#3a80ee, #245ddb 20%, #2257d2 85%, #1941a5);
  color: #fff;
}

.start {
  display: flex;
  align-items: center;
  gap: 3px;
  width: 60px;
  height: 19px;
  padding-left: 6px;
  background: linear-gradient(#56a555, #37963a 25%, #2e8a31 80%, #246b27);
  border-radius: 0 6px 6px 0;
  font: italic bold 10px "Open Sans", sans-serif;
}

.dots {
  width: 3px;
  height: 12px;
  margin: 0 6px;
  background: repeating-linear-gradient(#173c93 0 1px, transparent 1px 3px);
}

.xp .tool {
  margin-right: 2px;
}

.task {
  display: flex;
  align-items: center;
  gap: 2px;
  width: 100px;
  height: 17px;
  padding-left: 6px;
  background: #1c4fb9;
  border-radius: 2px;
}

.tray-dots {
  margin-left: auto;
}

.lang {
  width: 15px;
}

.tray {
  display: flex;
  align-items: center;
  width: 44px;
  height: 19px;
  padding-left: 5px;
  background: linear-gradient(#28a5f0, #1390e2);
  border-left: 1px solid #0f57b4;
}

.tray .glyph {
  width: 11px;
  height: 11px;
}

.seven {
  flex: 1;
  display: flex;
  align-items: center;
  background: linear-gradient(90deg, #2387bd, #2b8dc4 20%, #2a87c2 40%, #1a5590 58%, #17427a 75%, #15365f);
  border-top: 1px solid #123c66;
  color: #fff;
  white-space: nowrap;
}

.orb {
  display: flex;
  align-items: center;
  justify-content: center;
  width: 20px;
  height: 19px;
  margin-left: 7px;
  background: radial-gradient(#3d8fc0, #1b5078);
  border: 1px solid #8fc0d9;
  border-radius: 50%;
}

.seven .dots {
  margin: 0 7px 0 9px;
}

.pin {
  display: flex;
  align-items: center;
  justify-content: center;
  width: 27px;
  height: 17px;
  margin-right: 2px;
  background: linear-gradient(#8cc6e2, #4d9fcb);
  border: 1px solid #9fcfe5;
  border-radius: 2px;
}

.pin.bare {
  background: none;
  border: 0;
}

.pin.narrow {
  width: 22px;
}

.pin.gap {
  margin-left: 5px;
}

.pin .glyph {
  width: 11px;
  height: 11px;
}

.network {
  margin-left: auto;
}

.chevrons {
  margin: 0 8px 4px 4px;
  font-size: 9px;
}

.caret-up {
  border: 2px solid transparent;
  border-bottom-color: #fff;
  border-top: 0;
}

.icons {
  display: flex;
  gap: 4px;
  margin-left: 8px;
}

.icons .glyph {
  width: 11px;
  height: 11px;
}

.seven time {
  margin: 0 16px 0 20px;
}

.peek {
  width: 9px;
  height: 18px;
  background: #1f3f60;
  border: 1px solid #5e7b94;
}
</style>
